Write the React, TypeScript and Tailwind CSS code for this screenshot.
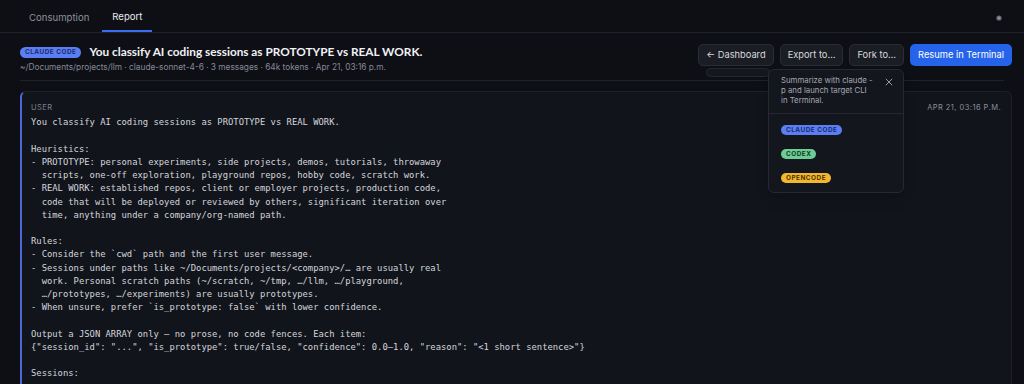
import React from "react";

const prompt = `You classify AI coding sessions as PROTOTYPE vs REAL WORK.

Heuristics:
- PROTOTYPE: personal experiments, side projects, demos, tutorials, throwaway
  scripts, one-off exploration, playground repos, hobby code, scratch work.
- REAL WORK: established repos, client or employer projects, production code,
  code that will be deployed or reviewed by others, significant iteration over
  time, anything under a company/org-named path.

Rules:
- Consider the \`cwd\` path and the first user message.
- Sessions under paths like ~/Documents/projects/<company>/… are usually real
  work. Personal scratch paths (~/scratch, ~/tmp, …/llm, …/playground,
  …/prototypes, …/experiments) are usually prototypes.
- When unsure, prefer \`is_prototype: false\` with lower confidence.

Output a JSON ARRAY only — no prose, no code fences. Each item:
{"session_id": "...", "is_prototype": true/false, "confidence": 0.0–1.0, "reason": "<1 short sentence>"}

Sessions:`;

function Badge({ label, className }: { label: string; className: string }) {
    return (
        <span className={`inline-flex items-center rounded-full px-[5px] h-[10px] text-[6.4px] font-bold tracking-[0.08em] leading-none ${className}`}>
            {label}
        </span>
    );
}

function ExportPopover() {
    return (
        <div className="absolute left-[768px] top-[36px] w-[136px] rounded-md border border-[#262934] bg-[#14161e] shadow-lg z-10">
            <div className="flex items-start justify-between px-3 pt-[5px] pb-[8px] border-b border-[#252833]">
                <p className="text-[7.8px] leading-[10px] text-[#a4a8b3]">
                    Summarize with claude -<br />p and launch target CLI<br />in Terminal.
                </p>
                <svg width="8" height="8" viewBox="0 0 10 10" className="mt-[3px] mr-[-2px]">
                    <path d="M1 1 L9 9 M9 1 L1 9" stroke="#9ea2ad" strokeWidth="1.2" />
                </svg>
            </div>
            <div className="flex flex-col items-start gap-[14px] px-3 pt-[11px] pb-[9px]">
                <Badge label="CLAUDE CODE" className="bg-[#5b7ef3] text-[#1b2b6e]" />
                <Badge label="CODEX" className="bg-[#6dcc93] text-[#113b23]" />
                <Badge label="OPENCODE" className="bg-[#f2b72f] text-[#4a3100]" />
            </div>
        </div>
    );
}

export default function App() {
    return (
        <div className="w-[1024px] h-[384px] overflow-hidden bg-[#0e0f15] text-white" style={{ fontFamily: "Inter, 'Noto Sans', sans-serif" }}>
            {/* tabs */}
            <div className="flex items-end justify-between pl-5 pr-5 h-[33px] border-b border-[#1f222b]">
                <div className="flex items-end h-full pt-[4px]">
                    <div className="px-[9px] h-full flex items-center text-[9.6px] text-[#8d919c]">Consumption</div>
                    <div className="ml-[4px] px-[10px] h-full flex items-center text-[9.6px] text-[#e8eaee] border-b-2 border-[#3b6df0]">Report</div>
                </div>
                <div className="h-full flex items-center pt-[3px] pr-[2px]">
                    <svg width="6" height="6" viewBox="0 0 6 6">
                        <circle cx="3" cy="3" r="2.6" fill="#6b6f7a" />
                        <circle cx="3" cy="3" r="1" fill="#9a9ea8" />
                    </svg>
                </div>
            </div>

            {/* header */}
            <div className="relative pl-5 pr-3">
                <div className="flex items-start justify-between pt-[11px] pb-[7px] border-b border-[#1f222b] mr-2">
                    <div className="flex flex-col">
                        <div className="flex items-center gap-[8px] h-[16px]">
                            <Badge label="CLAUDE CODE" className="bg-[#5b7ef3] text-[#1b2b6e] h-[11px]" />
                            <h1 className="text-[11.8px] font-bold text-[#f1f2f5]" style={{ fontFamily: "Lato, 'Liberation Sans', sans-serif" }}>
                                You classify AI coding sessions as PROTOTYPE vs REAL WORK.
                            </h1>
                        </div>
                        <div className="mt-[1px] text-[8.3px] text-[#858a96]">
                            ~/Documents/projects/llm · claude-sonnet-4-6 · 3 messages · 64k tokens · Apr 21, 03:16 p.m.
                        </div>
                    </div>
                    <div className="flex items-center gap-[6px] mr-[-8px] pb-[5px]">
                        <button className="h-[22px] px-[7px] rounded-[5px] border border-[#2a2d38] bg-[#1b1d25] text-[9.3px] text-[#d6d9df]">← Dashboard</button>
                        <button className="h-[22px] px-[7px] rounded-[5px] border border-[#2a2d38] bg-[#1b1d25] text-[9.3px] text-[#d6d9df]">Export to…</button>
                        <button className="h-[22px] px-[7px] rounded-[5px] border border-[#2a2d38] bg-[#1b1d25] text-[9.3px] text-[#d6d9df]">Fork to…</button>
                        <button className="h-[22px] px-[8px] rounded-[5px] bg-[#2563eb] text-[9.3px] text-white">Resume in Terminal</button>
                    </div>
                </div>
                <div className="absolute left-[706px] top-[35px] w-[64px] h-[9px] rounded-md border border-[#252834] bg-[#15171f]" />
                <ExportPopover />

                {/* message */}
                <div className="mt-[10px] rounded-md border border-[#1d2029] border-l-2 border-l-[#4d68d6] bg-[#12141b] pl-[9px] pr-[10px] pt-[9px] pb-4">
                    <div className="flex items-center justify-between h-[12px]">
                        <span className="text-[7.5px] tracking-[0.06em] text-[#7d828e]">USER</span>
                        <span className="text-[7.5px] tracking-[0.06em] text-[#8a8f9b]">APR 21, 03:16 P.M.</span>
                    </div>
                    <pre className="mt-[3px] text-[8.85px] leading-[13.2px] text-[#d3d6dc] whitespace-pre" style={{ fontFamily: "'DejaVu Sans Mono', 'Liberation Mono', monospace" }}>
                        {prompt}
                    </pre>
                </div>
            </div>
        </div>
    );
}
